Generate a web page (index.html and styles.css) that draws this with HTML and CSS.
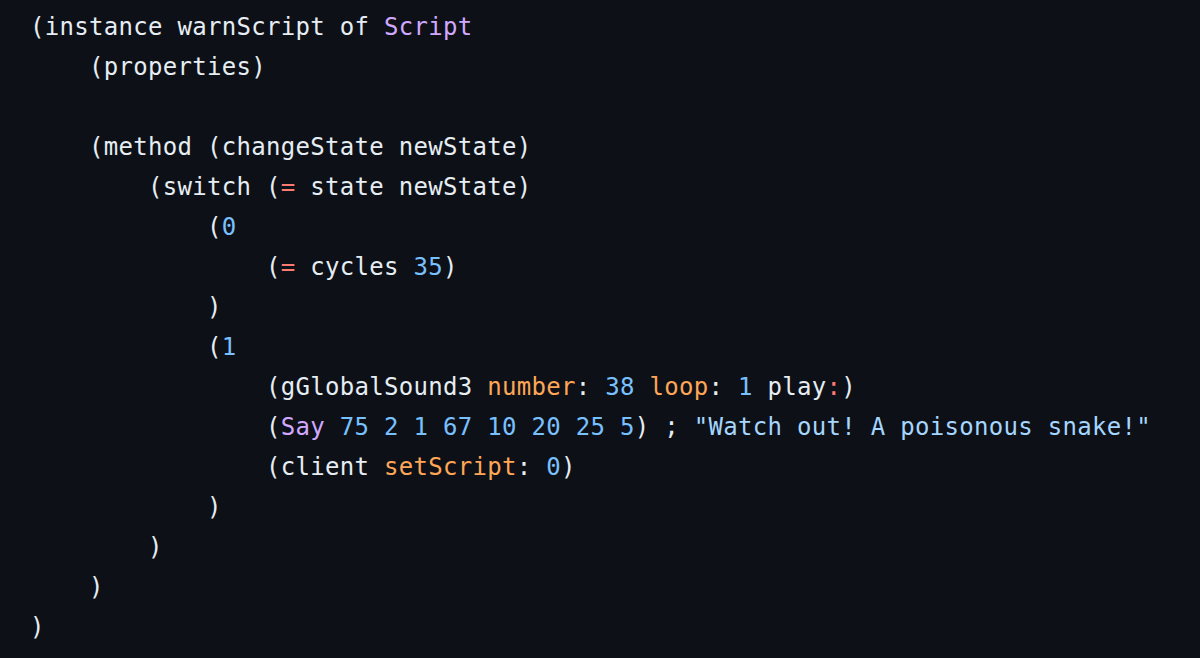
FILE: index.html
```html
<!DOCTYPE html>
<html>
<head>
<meta charset="utf-8">
<link rel="stylesheet" href="styles.css">
</head>
<body>
<div class="code">
  <div class="line">(instance warnScript of <span class="cls">Script</span></div>
  <div class="line l1">(properties)</div>
  <div class="line blank"></div>
  <div class="line l1">(method (changeState newState)</div>
  <div class="line l2">(switch (<span class="op">=</span> state newState)</div>
  <div class="line l3">(<span class="num">0</span></div>
  <div class="line l4">(<span class="op">=</span> cycles <span class="num">35</span>)</div>
  <div class="line l3">)</div>
  <div class="line l3">(<span class="num">1</span></div>
  <div class="line l4">(gGlobalSound3 <span class="sel">number</span>: <span class="num">38</span> <span class="sel">loop</span>: <span class="num">1</span> play<span class="op">:</span>)</div>
  <div class="line l4">(<span class="cls">Say</span> <span class="num">75</span> <span class="num">2</span> <span class="num">1</span> <span class="num">67</span> <span class="num">10</span> <span class="num">20</span> <span class="num">25</span> <span class="num">5</span>) ; <span class="str">"Watch out! A poisonous snake!"</span></div>
  <div class="line l4">(client <span class="sel">setScript</span>: <span class="num">0</span>)</div>
  <div class="line l3">)</div>
  <div class="line l2">)</div>
  <div class="line l1">)</div>
  <div class="line">)</div>
</div>
</body>
</html>
```
FILE: styles.css
```css
html, body {
  margin: 0;
  padding: 0;
  background: #0d1117;
  height: 100%;
}
.code {
  display: flex;
  flex-direction: column;
  padding: 7px 0 0 30px;
  font-family: "DejaVu Sans Mono", monospace;
  font-size: 24px;
  letter-spacing: 0.3px;
  line-height: 40px;
  color: #e6edf3;
}
.line {
  height: 40px;
  white-space: pre;
}
.l1 { padding-left: 59px; }
.l2 { padding-left: 118px; }
.l3 { padding-left: 177px; }
.l4 { padding-left: 236px; }
.cls { color: #d2a8ff; }
.op { color: #ff7b72; }
.num { color: #79c0ff; }
.sel { color: #ffa657; }
.str { color: #a5d6ff; }
```
